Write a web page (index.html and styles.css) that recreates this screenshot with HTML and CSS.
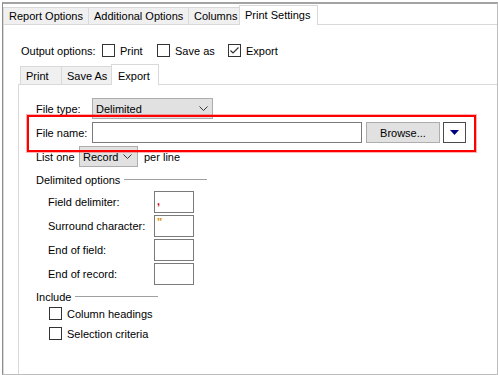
FILE: index.html
```html
<!DOCTYPE html>
<html lang="en">
<head>
  <meta charset="UTF-8" />
  <title>Print Settings</title>
  <link rel="stylesheet" href="styles.css">
</head>
<body>

  <div class="window">

    <!-- pestañas principales -->
    <div class="tabs">
      <div class="tab tab-report">Report Options</div>
      <div class="tab tab-additional">Additional Options</div>
      <div class="tab tab-columns">Columns</div>
      <div class="tab tab-settings active">Print Settings</div>
    </div>

    <div class="panel">
      <div class="output-row">
        <span class="output-label">Output options:</span>
        <label class="opt opt-print"><span class="check"></span>Print</label>
        <label class="opt opt-save"><span class="check"></span>Save as</label>
        <label class="opt opt-export">
          <span class="check">
            <svg width="11" height="11" viewBox="0 0 11 11"><polyline points="1.5,5.5 4,8 9.5,2.5" fill="none" stroke="#333" stroke-width="1.2"/></svg>
          </span>Export
        </label>
      </div>

      <div class="sub">
        <div class="subtabs">
          <div class="subtab subtab-print">Print</div>
          <div class="subtab subtab-save">Save As</div>
          <div class="subtab subtab-export active">Export</div>
        </div>

        <div class="subpanel">
          <div class="row row-type">
            <span class="label label-wide">File type:</span>
            <div class="select select-type">
              <span>Delimited</span>
              <svg width="9" height="5" viewBox="0 0 9 5"><polyline points="0.5,0.5 4.5,4.5 8.5,0.5" fill="none" stroke="#333" stroke-width="1"/></svg>
            </div>
          </div>

          <div class="row row-file">
            <span class="label label-wide">File name:</span>
            <div class="input input-file"></div>
            <div class="btn btn-browse">Browse...</div>
            <div class="btn-drop">
              <svg width="9" height="5" viewBox="0 0 9 5"><polygon points="0,0 9,0 4.5,5" fill="#000080"/></svg>
            </div>
          </div>

          <div class="row row-list">
            <span class="label label-list">List one</span>
            <div class="select select-record">
              <span>Record</span>
              <svg width="9" height="5" viewBox="0 0 9 5"><polyline points="0.5,0.5 4.5,4.5 8.5,0.5" fill="none" stroke="#333" stroke-width="1"/></svg>
            </div>
            <span class="per-line">per line</span>
          </div>

          <div class="group group-delim">
            <span>Delimited options</span>
            <span class="group-line"></span>
          </div>

          <div class="fields">
            <div class="field">
              <span class="field-label">Field delimiter:</span>
              <div class="box"><span class="char-comma">,</span></div>
            </div>
            <div class="field">
              <span class="field-label">Surround character:</span>
              <div class="box"><span class="char-quote">"</span></div>
            </div>
            <div class="field">
              <span class="field-label">End of field:</span>
              <div class="box"></div>
            </div>
            <div class="field">
              <span class="field-label">End of record:</span>
              <div class="box"></div>
            </div>
          </div>

          <div class="group group-include">
            <span>Include</span>
            <span class="group-line"></span>
          </div>

          <div class="includes">
            <label class="inc"><span class="check"></span>Column headings</label>
            <label class="inc"><span class="check"></span>Selection criteria</label>
          </div>

          <!-- marco rojo de resaltado -->
          <div class="highlight"></div>
        </div>
      </div>
    </div>
  </div>

</body>
</html>
```

FILE: styles.css
```css
/* === Base === */
* { margin:0; padding:0; box-sizing:border-box; }
html, body {
  width:100%; height:100%;
  background:#fff;
  overflow:hidden;
}
body {
  font-family: "Liberation Sans", Arial, sans-serif;
  font-size: 11px;
  color: #000;
}

/* === Ventana === */
.window {
  margin: 2px 0 0 2px;
  width: 496px; height: 373px;
  border-top: 2px solid #a3a3a3;
  border-left: 1px solid #8c8c8c;
  border-right: 1px solid #bdbdbd;
  border-bottom: 1px solid #bdbdbd;
  display: flex; flex-direction: column;
  overflow: hidden;
}

/* === Pestañas principales === */
.tabs {
  display: flex; align-items: flex-end;
  height: 20px;
}
.tab {
  height: 17px;
  margin-right: -1px;
  padding-left: 5px;
  border: 1px solid #d9d9d9;
  border-bottom: none;
  background: #f0f0f0;
  display: flex; align-items: center;
  white-space: nowrap;
}
.tab-report { width: 86px; }
.tab-additional { width: 101px; }
.tab-columns { width: 52px; }
.tab-settings { width: 79px; }
.tab.active {
  height: 20px;
  margin-bottom: -1px;
  background: #fff;
  padding-bottom: 1px;
  position: relative; z-index: 1;
}

.panel {
  flex: 1;
  border-top: 1px solid #d9d9d9;
  border-left: 1px solid #d9d9d9;
  display: flex; flex-direction: column;
}

/* === Output options === */
.output-row {
  display: flex; align-items: center;
  height: 13px;
  margin-top: 19px;
  padding-left: 17px;
}
.output-label { width: 81px; }
.opt {
  display: flex; align-items: center;
  gap: 5px;
}
.opt-print { width: 55px; }
.opt-save { width: 71px; }

.check {
  width: 13px; height: 13px;
  border: 1px solid #333;
  background: #fff;
  display: flex; align-items: center; justify-content: center;
  flex-shrink: 0;
}

/* === Sub pestañas === */
.sub {
  flex: 1;
  margin-top: 7px;
  margin-left: 14px;
  display: flex; flex-direction: column;
}
.subtabs {
  display: flex; align-items: flex-end;
  height: 20px;
  padding-left: 2px;
}
.subtab {
  height: 18px;
  margin-right: -1px;
  padding: 1px 0 0 5px;
  border: 1px solid #d9d9d9;
  border-bottom: none;
  background: #f0f0f0;
  display: flex; align-items: center;
}
.subtab-print { width: 42px; }
.subtab-save { width: 51px; }
.subtab-export { width: 48px; padding-left: 6px; }
.subtab.active {
  height: 21px;
  margin-bottom: -1px;
  background: #fff;
  position: relative; z-index: 1;
}

.subpanel {
  flex: 1;
  border-top: 1px solid #d9d9d9;
  border-left: 1px solid #d9d9d9;
  padding-left: 17px;
  position: relative;
}

/* === Filas === */
.row {
  display: flex; align-items: center;
}
.row-type { margin-top: 13px; }
.row-file { margin-top: 3px; }
.row-list { margin-top: 3px; }
.label-wide { width: 56px; }
.label-list { width: 43px; }

.select {
  height: 21px;
  border: 1px solid #adadad;
  background: #e1e1e1;
  display: flex; align-items: center; justify-content: space-between;
  padding: 0 4px 0 3px;
}
.select-type { width: 121px; }
.select-record { width: 59px; padding-right: 5px; }

.input {
  height: 21px;
  border: 1px solid #7a7a7a;
  background: #fff;
}
.input-file { width: 270px; }

.btn-browse {
  width: 74px; height: 21px;
  margin-left: 4px;
  border: 1px solid #adadad;
  background: #e1e1e1;
  display: flex; align-items: center; justify-content: center;
}
.btn-drop {
  width: 23px; height: 21px;
  margin-left: 3px;
  border: 1px solid #4a4a4a;
  background: #fff;
  display: flex; align-items: center; justify-content: center;
}
.per-line { margin-left: 6px; }

/* === Grupos === */
.group {
  display: flex; align-items: center;
  height: 14px;
}
.group-delim { margin-top: 6px; }
.group-include { margin-top: 5px; }
.group-line {
  height: 2px;
  border-top: 1px solid #a0a0a0;
  border-bottom: 1px solid #fff;
  margin-left: 4px;
}
.group-delim .group-line { width: 83px; }
.group-include .group-line { width: 83px; }

.fields {
  margin-top: 4px;
  padding-left: 12px;
  display: flex; flex-direction: column;
  gap: 2px;
}
.field {
  display: flex; align-items: center;
  height: 22px;
}
.field-label { width: 106px; }
.box {
  width: 40px; height: 22px;
  border: 1px solid #7a7a7a;
  background: #fff;
  padding-left: 2px;
  line-height: 18px;
}
.char-comma { color: #d00000; font-weight: bold; }
.char-quote {
  display: block;
  color: #e08c00;
  font-size: 11px;
  font-weight: bold;
  line-height: 11px;
  padding-top: 1px;
}

.includes {
  margin-top: 3px;
  padding-left: 13px;
  display: flex; flex-direction: column;
  gap: 7px;
}
.inc {
  display: flex; align-items: center;
  gap: 5px;
  height: 13px;
}

/* === Resaltado rojo === */
.highlight {
  position: absolute;
  left: 8px; top: 30px;
  width: 449px; height: 37px;
  border: 2px solid #ff0000;
  box-shadow: 0 0 0 1px rgba(255,0,0,0.3);
  pointer-events: none;
}
```
